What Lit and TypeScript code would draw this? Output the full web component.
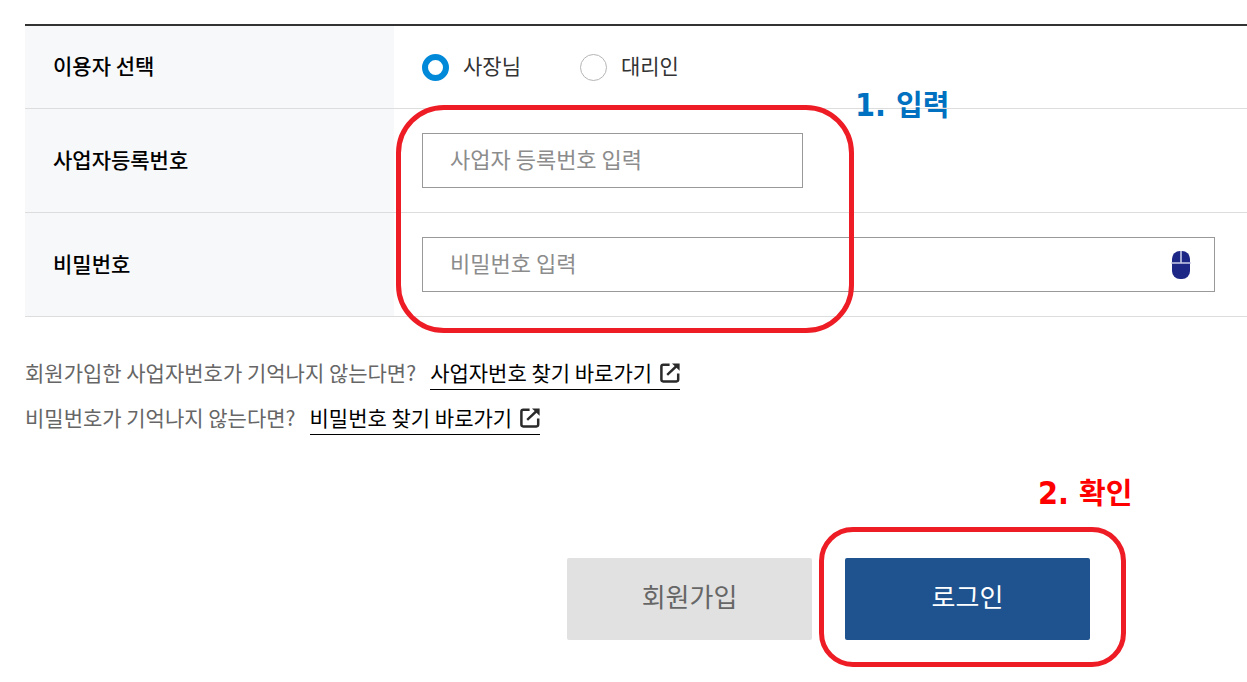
import { LitElement, html, css, svg } from "lit";
import { customElement, state } from "lit/decorators.js";

const mouseIcon = html`<svg width="20" height="28" viewBox="0 0 20 28" aria-hidden="true">
  ${svg`<rect x="1" y="0" width="18" height="28" rx="8" fill="#1d2786"/>
  <path d="M10 0V12M0 12H20" fill="none" stroke="#c9cce6" stroke-width="1.6"/>`}
</svg>`;

const outlinkIcon = html`<svg class="out" width="20" height="22" viewBox="0 -2 20 22" aria-hidden="true">
  ${svg`<path d="M9.6 1.8H3.2Q1.4 1.8 1.4 3.6V16.6Q1.4 18.4 3.2 18.4H16.4Q18.2 18.4 18.2 16.6V10.5" fill="none" stroke="#2a2a2a" stroke-width="2.5"/>
  <path d="M7.2 11.8L16.6 3" fill="none" stroke="#2a2a2a" stroke-width="2.4"/>
  <path d="M12 0.6H19.6V7.8Z" fill="#2a2a2a"/>`}
</svg>`;

@customElement("app-root")
export class AppRoot extends LitElement {
  @state() private user = "owner";

  static styles = css`
    :host {
      display: block;
      padding: 24px 0 42px 25px;
      background: #fff;
      color: #000;
      font-family: "Noto Sans CJK KR", sans-serif;
      font-size: 21px;
      line-height: 30px;
    }
    * {
      box-sizing: border-box;
    }
    .form {
      width: 100%;
      border-collapse: separate;
      border-spacing: 0;
      border-top: 2px solid #333;
      table-layout: fixed;
    }
    .head {
      width: 369px;
      padding: 0 28px 4px;
      background: #f7f8fa;
      border-bottom: 1px solid #ddd;
      font-weight: 500;
      text-align: left;
    }
    .cell {
      position: relative;
      padding: 24px 32px 24px 28px;
      border-bottom: 1px solid #ddd;
    }
    .radios {
      display: flex;
      gap: 59px;
    }
    .radio {
      display: flex;
      align-items: center;
      gap: 14px;
      color: #333;
    }
    .name {
      padding-bottom: 4px;
    }
    .dot {
      appearance: none;
      width: 27px;
      height: 27px;
      margin: 0;
      border: 1px solid #b5b5b5;
      border-radius: 50%;
      background: #fff;
    }
    .dot:checked {
      border: 6px solid #0089d9;
    }
    .field {
      display: flex;
      align-items: center;
      height: 55px;
      padding: 0 23px 0 27px;
      border: 1px solid #999;
      background: #fff;
    }
    .short {
      width: 381px;
    }
    .text {
      flex: 1;
      min-width: 0;
      height: 100%;
      padding: 0 0 6px;
      border: 0;
      outline: 0;
      background: transparent;
      color: #333;
      font: inherit;
      font-size: 22px;
    }
    .text::placeholder {
      color: #8c8c8c;
      opacity: 1;
    }
    .mouse {
      display: flex;
      padding: 0;
      border: 0;
      background: none;
    }
    .help {
      display: flex;
      flex-direction: column;
      gap: 13px;
      margin-top: 41px;
      color: #666;
    }
    .line {
      display: flex;
      flex-wrap: wrap;
      gap: 0 14px;
      margin: 0;
      line-height: 28px;
    }
    .link {
      display: flex;
      align-items: center;
      gap: 8px;
      height: 32px;
      padding-bottom: 3px;
      border-bottom: 1px solid #000;
      color: #000;
      text-decoration: none;
    }
    .actions {
      display: flex;
      justify-content: flex-end;
      gap: 33px;
      margin-top: 123px;
      padding-right: 157px;
    }
    .slot {
      position: relative;
    }
    .btn {
      display: block;
      width: 245px;
      height: 82px;
      padding: 0 0 6px;
      border: 0;
      border-radius: 2px;
      font: inherit;
      font-size: 26px;
    }
    .join {
      background: #e1e1e1;
      color: #666;
    }
    .login {
      background: #1f538f;
      color: #fff;
    }
    .ring {
      position: absolute;
      border: 5px solid #ee1c25;
      pointer-events: none;
      z-index: 1;
    }
    .ring-input {
      left: 2px;
      top: -4px;
      width: 458px;
      height: 228px;
      border-radius: 48px;
    }
    .ring-login {
      inset: -31px -36px -27px -26px;
      border-radius: 34px;
    }
    .note {
      position: absolute;
      z-index: 2;
      font: bold 32px/36px "DejaVu Sans Condensed", "DejaVu Sans", sans-serif;
      white-space: nowrap;
    }
    .word {
      font-family: "Noto Sans CJK KR", sans-serif;
      font-size: 29px;
    }
    .note-input {
      left: 461px;
      top: -24px;
      color: #0070c0;
    }
    .note-login {
      left: 193px;
      top: -85px;
      color: #f00;
    }
  `;

  private radio(value: string, label: string) {
    return html`<label class="radio">
      <input class="dot" type="radio" name="user" .value=${value}
        .checked=${this.user === value} @change=${() => (this.user = value)} />
      <span class="name">${label}</span>
    </label>`;
  }

  private helpLine(question: string, link: string) {
    return html`<p class="line">
      <span>${question}</span>
      <a class="link" href="#">${link}${outlinkIcon}</a>
    </p>`;
  }

  render() {
    return html`
      <form @submit=${(e: Event) => e.preventDefault()}>
        <table class="form">
          <tr>
            <th class="head" scope="row" id="user-label">이용자 선택</th>
            <td class="cell">
              <div class="radios" role="radiogroup" aria-labelledby="user-label">
                ${this.radio("owner", "사장님")}${this.radio("agent", "대리인")}
              </div>
            </td>
          </tr>
          <tr>
            <th class="head" scope="row"><label for="biz">사업자등록번호</label></th>
            <td class="cell">
              <div class="field short">
                <input class="text" id="biz" type="text" placeholder="사업자 등록번호 입력" />
              </div>
              <div class="ring ring-input"></div>
              <div class="note note-input">1. <span class="word">입력</span></div>
            </td>
          </tr>
          <tr>
            <th class="head" scope="row"><label for="pw">비밀번호</label></th>
            <td class="cell">
              <div class="field">
                <input class="text" id="pw" type="password" placeholder="비밀번호 입력" />
                <button class="mouse" type="button" aria-label="마우스 입력">${mouseIcon}</button>
              </div>
            </td>
          </tr>
        </table>
        <div class="help">
          ${this.helpLine("회원가입한 사업자번호가 기억나지 않는다면?", "사업자번호 찾기 바로가기")}
          ${this.helpLine("비밀번호가 기억나지 않는다면?", "비밀번호 찾기 바로가기")}
        </div>
        <div class="actions">
          <button class="btn join" type="button">회원가입</button>
          <div class="slot">
            <button class="btn login" type="submit">로그인</button>
            <div class="ring ring-login"></div>
            <div class="note note-login">2. <span class="word">확인</span></div>
          </div>
        </div>
      </form>
    `;
  }
}
